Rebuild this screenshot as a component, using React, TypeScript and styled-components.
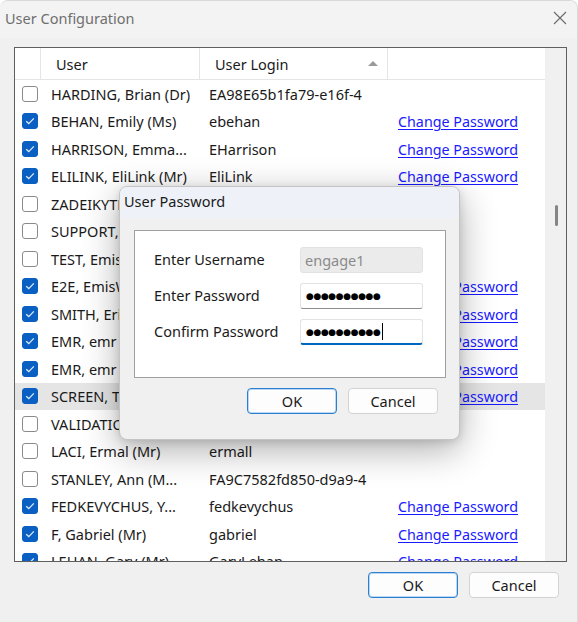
import React from "react";
import styled, { createGlobalStyle } from "styled-components";

const Global = createGlobalStyle`
  html, body { margin: 0; padding: 0; background: #ffffff; }
  body { font-family: "Noto Sans", "Open Sans", "Liberation Sans", sans-serif; color: #1a1a1a; }
  * { box-sizing: border-box; }
`;

type Row = {
  checked: boolean;
  name: string;
  login: string;
  link: boolean;
  selected?: boolean;
};

const rows: Row[] = [
  { checked: false, name: "HARDING, Brian (Dr)", login: "EA98E65b1fa79-e16f-4", link: false },
  { checked: true, name: "BEHAN, Emily (Ms)", login: "ebehan", link: true },
  { checked: true, name: "HARRISON, Emma...", login: "EHarrison", link: true },
  { checked: true, name: "ELILINK, EliLink (Mr)", login: "EliLink", link: true },
  { checked: false, name: "ZADEIKYTE, Ruta (Ms)", login: "rzadeikyte", link: false },
  { checked: false, name: "SUPPORT, Emis (Mr)", login: "support", link: false },
  { checked: false, name: "TEST, Emis (Mr)", login: "emistest", link: false },
  { checked: true, name: "E2E, EmisWeb (Mr)", login: "e2etest", link: true },
  { checked: true, name: "SMITH, Eric (Mr)", login: "esmith", link: true },
  { checked: true, name: "EMR, emr (Mr)", login: "emr1", link: true },
  { checked: true, name: "EMR, emr (Mrs)", login: "emr2", link: true },
  { checked: true, name: "SCREEN, Test (Mr)", login: "screen", link: true, selected: true },
  { checked: false, name: "VALIDATION, Test", login: "validation", link: false },
  { checked: false, name: "LACI, Ermal (Mr)", login: "ermall", link: false },
  { checked: false, name: "STANLEY, Ann (M...", login: "FA9C7582fd850-d9a9-4", link: false },
  { checked: true, name: "FEDKEVYCHUS, Y...", login: "fedkevychus", link: true },
  { checked: true, name: "F, Gabriel (Mr)", login: "gabriel", link: true },
  { checked: true, name: "LEHAN, Gary (Mr)", login: "GaryLehan", link: true },
];

const Window = styled.div`
  position: relative;
  width: 578px;
  height: 622px;
  background: #f0f0f0;
  border-top: 1px solid #d9d9d9;
  border-right: 1px solid #d9d9d9;
  border-radius: 8px 8px 0 0;
  display: flex;
  flex-direction: column;
  overflow: hidden;
`;

const TitleBar = styled.div`
  height: 37px;
  display: flex;
  align-items: center;
  justify-content: space-between;
  padding: 0 10px 3px 5px;
  background: #f3f3f3;
`;

const TitleText = styled.span`
  font-size: 14.5px;
  color: #6f6f6f;
`;

const Body = styled.div`
  padding: 9px 10px 0 14px;
`;

const ListBox = styled.div`
  height: 515px;
  border: 1px solid #5f5f5f;
  background: #ffffff;
  display: flex;
  overflow: hidden;
`;

const ListMain = styled.div`
  width: 530px;
  display: flex;
  flex-direction: column;
`;

const Cols = "26px 159px 188px 157px";

const Header = styled.div`
  height: 32px;
  flex: none;
  display: grid;
  grid-template-columns: ${Cols};
  border-bottom: 1px solid #e5e5e5;
`;

const HeadCell = styled.div`
  position: relative;
  display: flex;
  align-items: center;
  padding-left: 15px;
  font-size: 14.5px;
  color: #1a1a1a;
  border-right: 1px solid #e5e5e5;
  &:last-child { border-right: none; }
`;

const SortArrow = styled.span`
  position: absolute;
  right: 9px;
  top: 13px;
  width: 0;
  height: 0;
  border-left: 5px solid transparent;
  border-right: 5px solid transparent;
  border-bottom: 5px solid #9a9a9a;
`;

const RowLine = styled.div<{ $selected?: boolean }>`
  height: 27.5px;
  flex: none;
  display: grid;
  grid-template-columns: ${Cols};
  align-items: center;
  background: ${(p) => (p.$selected ? "#e5e5e5" : "transparent")};
`;

const CheckCell = styled.div`
  display: flex;
  align-items: center;
  padding-left: 7px;
`;

const Box = styled.span<{ $on: boolean }>`
  width: 16px;
  height: 16px;
  border-radius: 3px;
  display: flex;
  align-items: center;
  justify-content: center;
  background: ${(p) => (p.$on ? "#0a5fc2" : "#ffffff")};
  border: 1px solid ${(p) => (p.$on ? "#0a5fc2" : "#8a8a8a")};
`;

const TextCell = styled.div<{ $pad: number }>`
  padding-left: ${(p) => p.$pad}px;
  font-size: 14.5px;
  white-space: nowrap;
  overflow: hidden;
  color: #1a1a1a;
`;

const Link = styled.a`
  color: #1a1aff;
  text-decoration: underline;
  text-underline-offset: 2px;
  font-size: 14.3px;
  padding-left: 10px;
  white-space: nowrap;
`;

const ScrollTrack = styled.div`
  width: 21px;
  background: #f0f0f0;
  position: relative;
`;

const Thumb = styled.div`
  position: absolute;
  left: 10px;
  top: 157px;
  width: 3px;
  height: 21px;
  border-radius: 2px;
  background: #858585;
`;

const Footer = styled.div`
  display: flex;
  justify-content: flex-end;
  gap: 11px;
  padding: 10px 18px 0 0;
`;

const Button = styled.button<{ $primary?: boolean }>`
  width: 90px;
  height: 26px;
  border-radius: 4px;
  background: #fdfdfd;
  border: 1px solid ${(p) => (p.$primary ? "#2a7fd0" : "#d3d3d3")};
  box-shadow: ${(p) => (p.$primary ? "inset 0 0 0 1px #bcd7f2" : "none")};
  font-family: inherit;
  font-size: 14.5px;
  color: #1a1a1a;
  padding: 0;
`;

const Dialog = styled.div`
  position: absolute;
  left: 119px;
  top: 185px;
  width: 341px;
  height: 254px;
  border-radius: 8px;
  border: 1px solid #c4c4c4;
  background: #f0f0f0;
  box-shadow: 0 10px 36px rgba(0, 0, 0, 0.32), 0 2px 8px rgba(0, 0, 0, 0.12);
  display: flex;
  flex-direction: column;
  overflow: hidden;
`;

const DialogTitle = styled.div`
  height: 31px;
  display: flex;
  align-items: center;
  padding: 0 0 3px 4px;
  background: #eef2f8;
  font-size: 14.5px;
  color: #1a1a1a;
`;

const Panel = styled.div`
  margin: 12px 13px 0 14px;
  height: 148px;
  background: #ffffff;
  border: 1px solid #a0a0a0;
  padding: 16px 0 0 19px;
  display: grid;
  grid-template-columns: 146px 123px;
  grid-auto-rows: 26px;
  row-gap: 10px;
  align-items: center;
`;

const Label = styled.span`
  font-size: 14.5px;
  color: #1a1a1a;
  padding-bottom: 2px;
`;

const Field = styled.div<{ $disabled?: boolean; $focus?: boolean }>`
  height: 26px;
  border-radius: 3px;
  display: flex;
  align-items: center;
  padding-left: 4px;
  background: ${(p) => (p.$disabled ? "#ebebeb" : "#ffffff")};
  border: 1px solid ${(p) => (p.$disabled ? "#e2e2e2" : "#e3e3e3")};
  border-bottom: ${(p) =>
    p.$disabled ? "1px solid #e2e2e2" : p.$focus ? "2px solid #0067c0" : "1px solid #8d8d8d"};
  font-size: 14.5px;
  color: #8a8a8a;
`;

const Dots = styled.span`
  font-family: "DejaVu Sans", sans-serif;
  font-size: 9px;
  letter-spacing: -0.4px;
  color: #000000;
  padding-left: 1px;
`;

const Caret = styled.span`
  width: 1px;
  height: 17px;
  background: #000000;
  margin-left: 1px;
`;

const DialogButtons = styled.div`
  display: flex;
  justify-content: flex-end;
  gap: 11px;
  padding: 10px 21px 0 0;
`;

const Check = () => (
  <svg width="10" height="8" viewBox="0 0 10 8">
    <path d="M1.2 4.2 L3.8 6.6 L8.8 1.4" fill="none" stroke="#dfeaf7" strokeWidth="1.3" />
  </svg>
);

const CloseIcon = () => (
  <svg width="14" height="14" viewBox="0 0 14 14">
    <path d="M1 1 L13 13 M13 1 L1 13" stroke="#6a6a6a" strokeWidth="1.1" />
  </svg>
);

export default function App() {
  return (
    <>
      <Global />
      <Window>
        <TitleBar>
          <TitleText>User Configuration</TitleText>
          <CloseIcon />
        </TitleBar>
        <Body>
          <ListBox>
            <ListMain>
              <Header>
                <HeadCell />
                <HeadCell>User</HeadCell>
                <HeadCell>
                  User Login
                  <SortArrow />
                </HeadCell>
                <HeadCell />
              </Header>
              {rows.map((r, i) => (
                <RowLine key={i} $selected={r.selected}>
                  <CheckCell>
                    <Box $on={r.checked}>{r.checked && <Check />}</Box>
                  </CheckCell>
                  <TextCell $pad={10}>{r.name}</TextCell>
                  <TextCell $pad={9}>{r.login}</TextCell>
                  <div>{r.link && <Link>Change Password</Link>}</div>
                </RowLine>
              ))}
            </ListMain>
            <ScrollTrack>
              <Thumb />
            </ScrollTrack>
          </ListBox>
        </Body>
        <Footer>
          <Button $primary>OK</Button>
          <Button>Cancel</Button>
        </Footer>
        <Dialog>
          <DialogTitle>User Password</DialogTitle>
          <Panel>
            <Label>Enter Username</Label>
            <Field $disabled>engage1</Field>
            <Label>Enter Password</Label>
            <Field>
              <Dots>●●●●●●●●●●</Dots>
            </Field>
            <Label>Confirm Password</Label>
            <Field $focus>
              <Dots>●●●●●●●●●●</Dots>
              <Caret />
            </Field>
          </Panel>
          <DialogButtons>
            <Button $primary>OK</Button>
            <Button>Cancel</Button>
          </DialogButtons>
        </Dialog>
      </Window>
    </>
  );
}
